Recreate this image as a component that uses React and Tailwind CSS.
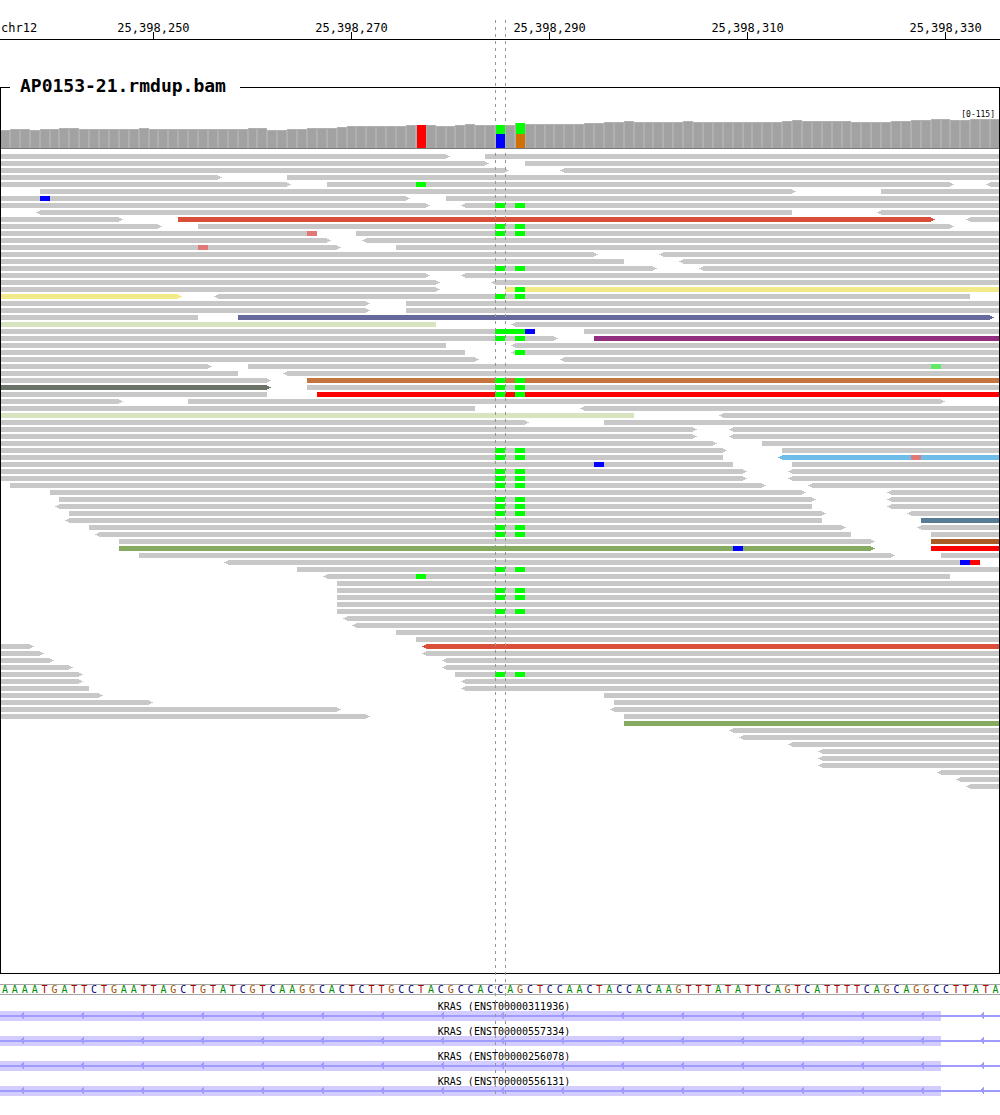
const BASES = 101;
const pct = (b) => `${(b * 100) / BASES}%`;

const TICKS = [
  [15.5, "25,398,250"],
  [35.5, "25,398,270"],
  [55.5, "25,398,290"],
  [75.5, "25,398,310"],
  [95.5, "25,398,330"],
];

const SEQUENCE =
  "AAAATGATTCTGAATTAGCTGTATCGTCAAGGCA" +
  "CTCTTGCCTACGCCACCAGCTCCAACTACCACAA" +
  "GTTTATATTCAGTCATTTTCAGCAGGCCTTATA";

const LETTER = {
  A: "text-[#008c00]",
  C: "text-[#000082]",
  G: "text-[#a05000]",
  T: "text-[#b40000]",
};

// Run-length list of [height in px, number of bases].
const COVERAGE = [
  [18, 1], [19, 2], [18, 1], [19, 2], [20, 2], [19, 6], [20, 1], [19, 10], [20, 2],
  [18, 2], [19, 2], [20, 3], [21, 1], [22, 6], [23, 3], [22, 2], [23, 1], [24, 1],
  [23, 4], [25, 1], [24, 6], [25, 2], [26, 2], [27, 1], [26, 5], [27, 1], [26, 9],
  [27, 1], [28, 1], [27, 5], [26, 4], [27, 2], [28, 2], [29, 2], [28, 2], [29, 3],
].flatMap(([h, n]) => Array(n).fill(h));

const ALLELES = {
  42: ["bg-[#ff0000]", "bg-[#ff0000]"],
  50: ["bg-[#00ff00]", "bg-[#0000ff]"],
  52: ["bg-[#00ff00]", "bg-[#d07005]"],
};

const COLORS = {
  grey: "#c8c8c8",
  red: "#d94f3a",
  yellow: "#f2ea88",
  slate: "#66699c",
  pale: "#d8e4bf",
  purple: "#912e7f",
  copper: "#c5753e",
  moss: "#6b7369",
  bright: "#ff0000",
  sky: "#6fbce8",
  olive: "#87aa61",
  steel: "#567c96",
  rust: "#a85a24",
  A: "#00ff00",
  a: "#62e862",
  C: "#0000ff",
  T: "#ff0000",
  t: "#e07878",
};

// One line per row. A read is start-end with optional "<" / ">" strand tips and
// ":colour"; a mismatch is @base:colour; "AA" stands for @50:A @52:A.
const READS = `
0-45> 49-101
0-49> 53-101
0-51> <57-101
0-22> 29-101
0-29> 33-96> <100-101 @42:A
4-80> 89-101
0-41> 45-101 @4:C
0-43> <47-101 AA
<4-80 <89-101
0-12> 18-94>:red <98-101
0-16> 20-96> AA
0-32 36-101 @31:t AA
0-33> <37-101
0-34> 40-101 @20:t
0-60> <67-101
0-63 <69-101
0-66> <71-101 AA
0-43> <47-101
0-44> <50-101
0-44> 51-101:yellow @52:A
0-18>:yellow <22-98 AA
0-37> 41-101
0-37> 41-101
0-20 24-100>:slate
0-44:pale <52-101
0-54 59-101 @51:A @53:C AA
0-56> 60-101:purple AA
0-45 <52-101
0-47 <52-101 @52:A
0-48> <57-101
0-21> 25-101 @94:a
0-24 <29-101
0-27> 31-101:copper AA
0-27>:moss 31-101 AA
0-27 32-101:bright AA
0-12> 19-95>
0-48 <59-101
0-64:pale <73-101
0-53> 61-101
0-70> <74-101
0-70> <74-101
0-72> 77-101
0-73> 79-101 AA
0-73 <79-101:sky @92:t AA
0-74 80-101 @60:C
0-75> <80-101 AA
0-75> <80-101 AA
1-77> <82-101 AA
5-81> <90-101
6-82> <90-101 AA
<6-82 <90-101 AA
7-83> <92-101 AA
<7-83 93-101:steel
9-85> <93-101 AA
<10-86 94-101 AA
12-88> 94-101:rust
12-88>:olive 94-101:bright @74:C
14-90> 95-101
<23-99 @97:C @98:T
30-101 AA
<33-96 @42:A
34-101
34-101 AA
34-101 AA
34-101
34-101 AA
<35-101
<36-101
40-101
42-101
0-3> <43-101:red
0-4> <43-101
0-5> <45-101
0-7> <45-101
0-8> 46-101 AA
0-8> <47-101
0-9 <47-101
0-10> 61-101
0-15> 62-101
0-34> <62-101
0-37> 63-101
63-101:olive
<74-101
<75-101
<80-101
<83-101
<83-101
<83-101
<95-101
<97-101
<98-101`
  .trim()
  .split("\n")
  .map((line) => line.replace("AA", "@50:A @52:A").split(" "));

const GENES = ["ENST00000311936", "ENST00000557334", "ENST00000256078", "ENST00000556131"];

function Ruler() {
  return (
    <svg className="block h-10 w-full text-[12px]" shapeRendering="crispEdges">
      <text x="1" y="32">chr12</text>
      {TICKS.map(([b, label]) => (
        <g key={label}>
          <text x={pct(b)} y="32" textAnchor="middle">{label}</text>
          <rect x={pct(b - 0.05)} y="32" width="1" height="7" />
        </g>
      ))}
      <rect y="39" width="100%" height="1" />
    </svg>
  );
}

function Coverage() {
  return (
    <div className="relative z-10 h-12 border-b border-[#787878]">
      <div className="grid h-full grid-cols-[repeat(101,minmax(0,1fr))] items-end">
        {COVERAGE.map((h, i) =>
          ALLELES[i] ? (
            <div key={i} className="flex flex-col border-l border-[#b0b0b0]" style={{ height: h }}>
              <div className={`flex-1 ${ALLELES[i][0]}`} />
              <div className={`h-[14px] ${ALLELES[i][1]}`} />
            </div>
          ) : (
            <div key={i} className="border-x border-t border-[#b0b0b0] bg-[#a2a2a2]" style={{ height: h }} />
          )
        )}
      </div>
      <span className="absolute right-[5px] top-[9px] text-[8px] leading-[10px]">[0-115]</span>
    </div>
  );
}

function Item({ spec, y }) {
  if (spec[0] === "@") {
    const [b, c] = spec.slice(1).split(":");
    return <rect x={pct(+b)} y={y} width={pct(1)} height="5" fill={COLORS[c]} />;
  }
  const [, left, s, e, right, color] = spec.match(/^(<?)(\d+)-(\d+)(>?)(?::(\w+))?$/);
  return (
    <g fill={COLORS[color || "grey"]}>
      <rect x={pct(+s)} y={y} width={pct(e - s)} height="5" />
      {left && (
        <svg x={pct(+s)} y={y} className="overflow-visible">
          <rect x="-2" y="1" width="3" height="3" />
          <rect x="-4" y="2" width="3" height="1" />
        </svg>
      )}
      {right && (
        <svg x={pct(+e)} y={y} className="overflow-visible">
          <rect x="-1" y="1" width="3" height="3" />
          <rect x="1" y="2" width="3" height="1" />
        </svg>
      )}
    </g>
  );
}

function Reads() {
  return (
    <svg className="mt-[5px] block h-[819px] w-full" shapeRendering="crispEdges">
      {READS.map((row, i) => (
        <g key={i}>
          {row.map((spec) => (
            <Item key={spec} spec={spec} y={i * 7} />
          ))}
        </g>
      ))}
    </svg>
  );
}

function Gene({ id }) {
  return (
    <div>
      <div className="flex h-[15px] items-end justify-center pl-2 text-[10px] leading-[8px]">
        KRAS ({id})
      </div>
      <svg className="block h-[10px] w-full" shapeRendering="crispEdges">
        <defs>
          <pattern id={id} width="60" height="10" patternUnits="userSpaceOnUse">
            <g fill="#a09bff">
              <rect x="21" y="3" width="1" height="3" />
              <rect x="22" y="2" width="1" height="5" />
              <rect x="23" y="1" width="1" height="7" />
            </g>
          </pattern>
        </defs>
        <rect width={pct(95)} height="10" fill="#d2ccff" />
        <rect y="4" width="100%" height="2" fill="#a09bff" />
        <rect width="100%" height="10" fill={`url(#${id})`} />
      </svg>
    </div>
  );
}

function Guides() {
  return (
    <>
      {[50, 51].map((b) => (
        <div
          key={b}
          className="pointer-events-none absolute bottom-0 top-5 w-px bg-[repeating-linear-gradient(to_bottom,#969696_0_3px,transparent_3px_7px)]"
          style={{ left: pct(b) }}
        />
      ))}
    </>
  );
}

export default function App() {
  return (
    <main className="relative overflow-x-hidden bg-white font-['DejaVu_Sans_Mono',monospace] text-black">
      <Ruler />
      <fieldset className="mt-[34px] min-w-0 border border-black">
        <legend className="ml-[9px] pb-1 pl-[10px] pr-[14px] text-[18px] font-bold leading-[23px]">
          AP0153-21.rmdup.bam
        </legend>
        <div className="relative -mx-px after:absolute after:inset-0 after:z-20 after:border-x after:border-black after:content-['']">
          <Coverage />
          <Reads />
        </div>
      </fieldset>
      <div className="mt-[10px] flex h-[11px] items-center border-y border-[#a5a5a5] text-[10px] leading-[9px]">
        {[...SEQUENCE].map((c, i) => (
          <span key={i} className={`w-0 flex-1 text-center ${LETTER[c]}`}>
            {c}
          </span>
        ))}
      </div>
      <div className="mt-px">
        {GENES.map((id) => (
          <Gene key={id} id={id} />
        ))}
      </div>
      <Guides />
    </main>
  );
}
